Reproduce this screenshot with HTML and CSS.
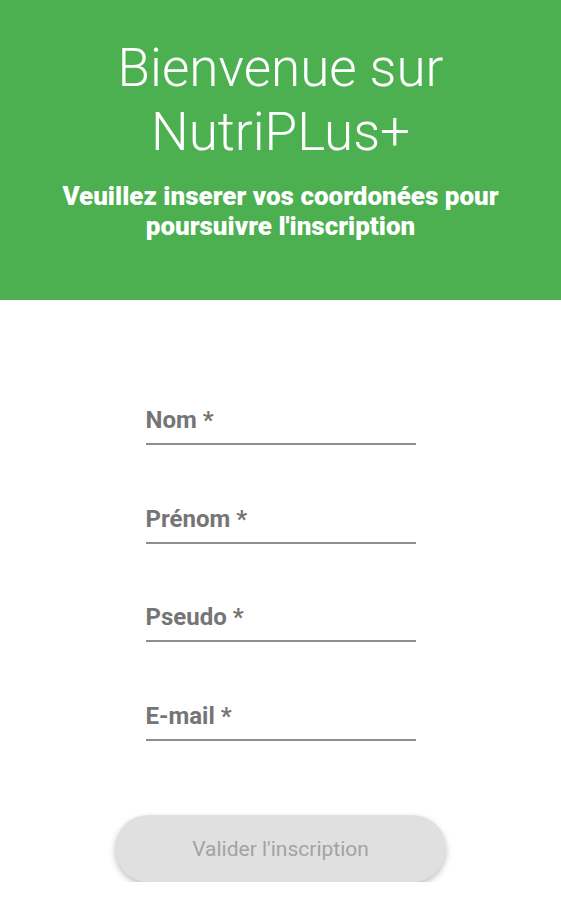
FILE: index.html
```html
<!DOCTYPE html>
<html lang="fr">
<head>
<meta charset="utf-8">
<title>NutriPLus+</title>
<link rel="stylesheet" href="styles.css">
</head>
<body>
<header class="hero">
  <h1 class="hero-title">Bienvenue sur NutriPLus+</h1>
  <p class="hero-sub">Veuillez inserer vos coordonées pour poursuivre l'inscription</p>
</header>
<main class="form">
  <label class="field"><span class="field-label">Nom *</span></label>
  <label class="field"><span class="field-label">Prénom *</span></label>
  <label class="field"><span class="field-label">Pseudo *</span></label>
  <label class="field"><span class="field-label">E-mail *</span></label>
  <button class="submit" type="button">Valider l'inscription</button>
</main>
</body>
</html>
```
FILE: styles.css
```css
* { box-sizing: border-box; }
html, body { margin: 0; padding: 0; background: #fff; }
body { font-family: Roboto, "Noto Sans", sans-serif; }

.hero {
  background: #4caf50;
  height: 300px;
  padding-top: 36px;
  text-align: center;
  color: #fff;
}
.hero-title {
  margin: 0 auto;
  width: 400px;
  font-weight: 300;
  font-size: 53px;
  line-height: 64px;
}
.hero-sub {
  margin: 17px 30px 0;
  font-weight: 900;
  font-size: 26px;
  line-height: 30px;
}

.form {
  display: flex;
  flex-direction: column;
  align-items: center;
  padding-top: 108px;
}
.field {
  display: block;
  width: 270px;
  height: 37px;
  border-bottom: 2px solid #8d8d8d;
  padding-bottom: 11px;
  margin-bottom: 61.5px;
}
.field-label {
  display: block;
  font-weight: 700;
  font-size: 24px;
  line-height: 24px;
  color: #757575;
}
.submit {
  margin-top: 13px;
  width: 331px;
  height: 67px;
  border: none;
  border-radius: 34px;
  background: #e0e0e0;
  color: #a3a3a3;
  font-family: Roboto, sans-serif;
  font-size: 21px;
  box-shadow: 0 3px 6px rgba(0,0,0,0.25);
}
```
